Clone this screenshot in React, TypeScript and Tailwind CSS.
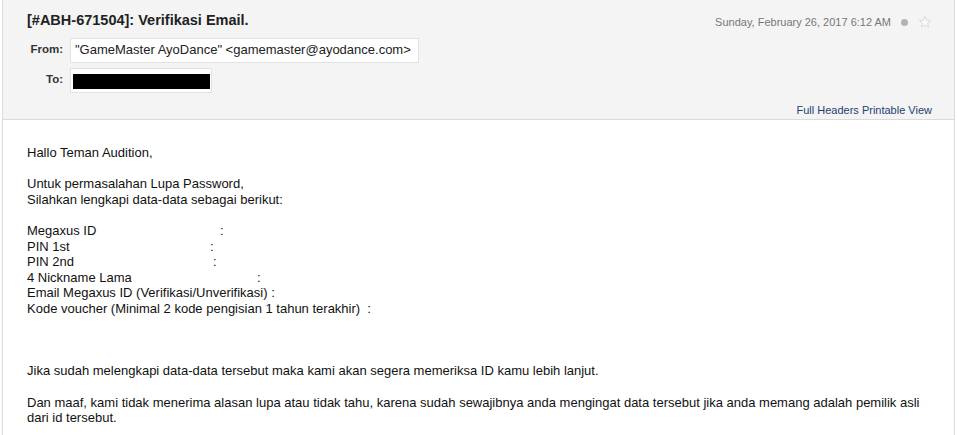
import React from "react";

export default function App() {
  const arial = { fontFamily: '"Liberation Sans", Arial, sans-serif' };
  return (
    <div className="w-[957px] h-[435px] bg-white overflow-hidden" style={arial}>
      <div className="mx-[2px] h-full border-x border-[#dcdcdc]">
        {/* header */}
        <div className="bg-[#f4f4f4] border-b border-[#dadada] h-[120px] pl-[24px] pr-[22px] pt-[11px]">
          <div className="flex items-start justify-between">
            <h1 className="text-[14.5px] leading-[18px] font-bold text-[#222]">[#ABH-671504]: Verifikasi Email.</h1>
            <div className="flex items-center pt-[3px] text-[11px] text-[#777]">
              <span>Sunday, February 26, 2017 6:12 AM</span>
              <span className="ml-[10px] w-[7px] h-[7px] rounded-full bg-[#b3b3b3]" />
              <svg className="ml-[10px]" width="14" height="14" viewBox="0 0 24 24">
                <path d="M12 2.5l2.9 6.3 6.9.7-5.2 4.6 1.5 6.8L12 17.4l-6.1 3.5 1.5-6.8-5.2-4.6 6.9-.7z" fill="#f8f8f8" stroke="#d2d2d2" strokeWidth="1.3" />
              </svg>
            </div>
          </div>
          <div className="mt-[7px] flex items-center">
            <span className="w-[36px] text-right text-[11.5px] font-bold text-[#333]">From:</span>
            <div className="ml-[7px] w-[349px] h-[25px] bg-white border border-[#e2e2e2] flex items-center px-[4px] text-[13px] text-[#222] whitespace-nowrap">
              "GameMaster AyoDance" &lt;gamemaster@ayodance.com&gt;
            </div>
          </div>
          <div className="mt-[5px] flex items-center">
            <span className="w-[36px] text-right text-[11.5px] font-bold text-[#333]">To:</span>
            <div className="ml-[7px] w-[142px] h-[25px] bg-white border border-[#e2e2e2] flex items-center pl-[2px]">
              <div className="w-[137px] h-[15px] bg-black mt-[2px]" />
            </div>
          </div>
          <div className="mt-[9px] flex justify-end text-[11px] text-[#1e3f72]">
            <span>Full Headers</span>
            <span className="ml-[3px]">Printable View</span>
          </div>
        </div>
        {/* body */}
        <div className="pl-[24px] pr-[10px] pt-[25px] text-[13px] leading-[15.6px] text-[#111]">
          <div>Hallo Teman Audition,</div>
          <div>&nbsp;</div>
          <div>Untuk permasalahan Lupa Password,</div>
          <div>Silahkan lengkapi data-data sebagai berikut:</div>
          <div>&nbsp;</div>
          <div><span className="inline-block w-[193px]">Megaxus ID</span>:</div>
          <div><span className="inline-block w-[183px]">PIN 1st</span>:</div>
          <div><span className="inline-block w-[186px]">PIN 2nd</span>:</div>
          <div><span className="inline-block w-[230px]">4 Nickname Lama</span>:</div>
          <div>Email Megaxus ID (Verifikasi/Unverifikasi) :</div>
          <div>Kode voucher (Minimal 2 kode pengisian 1 tahun terakhir)&nbsp; :</div>
          <div>&nbsp;</div>
          <div>&nbsp;</div>
          <div>&nbsp;</div>
          <div>Jika sudah melengkapi data-data tersebut maka kami akan segera memeriksa ID kamu lebih lanjut.</div>
          <div>&nbsp;</div>
          <div>Dan maaf, kami tidak menerima alasan lupa atau tidak tahu, karena sudah sewajibnya anda mengingat data tersebut jika anda memang adalah pemilik asli dari id tersebut.</div>
        </div>
      </div>
    </div>
  );
}
